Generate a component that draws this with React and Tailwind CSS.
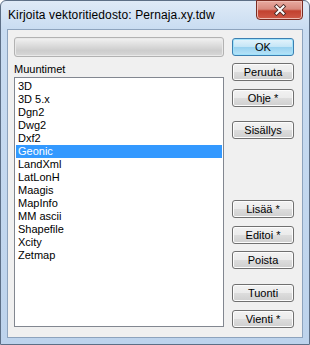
const items = [
  "3D",
  "3D 5.x",
  "Dgn2",
  "Dwg2",
  "Dxf2",
  "Geonic",
  "LandXml",
  "LatLonH",
  "Maagis",
  "MapInfo",
  "MM ascii",
  "Shapefile",
  "Xcity",
  "Zetmap",
];

function Btn({ label, def, className = "" }) {
  return (
    <div
      className={`h-[18px] w-[62px] rounded-[3px] border flex items-center justify-center text-[11px] leading-none text-black ${
        def
          ? "border-[#3c7fb1] bg-[linear-gradient(to_bottom,#e5f4fc_0%,#c4e5f6_50%,#98d1ef_50%,#b7e3f8_100%)] shadow-[inset_0_0_0_1px_#9ee2fb]"
          : "border-[#707070] bg-[linear-gradient(to_bottom,#f2f2f2_0%,#ebebeb_50%,#dddddd_50%,#cfcfcf_100%)] shadow-[inset_0_0_0_1px_#fcfcfc]"
      } ${className}`}
    >
      {label}
    </div>
  );
}

export default function App() {
  return (
    <div
      className="w-[310px] h-[345px] flex flex-col rounded-t-[6px] border border-[#5d6f86] bg-[linear-gradient(to_bottom,#dfeaf7_0px,#c9dcf1_28px,#bdd3ec_100%)]"
      style={{ fontFamily: '"Liberation Sans", Arial, sans-serif' }}
    >
      {/* otsikkopalkki */}
      <div className="h-[28px] flex items-start">
        <div className="pl-[7px] pt-[7px] text-[12px] leading-[15px] tracking-[0.12px] text-black">
          Kirjoita vektoritiedosto: Pernaja.xy.tdw
        </div>
        <div className="ml-auto mr-[6px] -mt-px h-[20px] w-[47px] rounded-b-[4px] border border-[#7a2c22] bg-[linear-gradient(to_bottom,#e8aaa0_0%,#d88a7e_45%,#c2412f_55%,#cf5a48_100%)] shadow-[inset_0_0_0_1px_#eebbb2] flex items-center justify-center">
          <svg width="14" height="12" viewBox="0 0 14 12">
            <path
              d="M3.5 2.5 L10.5 9.5 M10.5 2.5 L3.5 9.5"
              stroke="#4a2a26"
              strokeWidth="3.8"
              strokeLinecap="square"
            />
            <path
              d="M3.5 2.5 L10.5 9.5 M10.5 2.5 L3.5 9.5"
              stroke="#ffffff"
              strokeWidth="2"
              strokeLinecap="square"
            />
          </svg>
        </div>
      </div>

      {/* asiakasalue */}
      <div className="flex-1 mx-[6px] mb-[6px] border border-[#8da3bd] bg-[#f0f0f0] flex">
        <div className="ml-[6px] w-[210px] flex flex-col">
          <div className="mt-[7px] h-[20px] rounded-[3px] border border-[#b2b2b2] bg-[linear-gradient(to_bottom,#f3f3f3_0%,#e2e2e2_30%,#cdcdcd_70%,#d8d8d8_100%)] shadow-[inset_0_0_0_1px_#e9e9e9]" />
          <div className="pt-[6px] pb-px text-[11px] leading-[13px] text-black">
            Muuntimet
          </div>
          <div className="h-[250px] border border-[#828790] bg-white pt-[2px] px-px">
            {items.map((it) => (
              <div
                key={it}
                className={`h-[13px] pl-[2px] text-[11px] leading-[13px] ${
                  it === "Geonic" ? "bg-[#3399ff] text-white" : "text-black"
                }`}
              >
                {it}
              </div>
            ))}
          </div>
        </div>

        <div className="ml-[8px] flex flex-col">
          <Btn label="OK" def className="mt-[8px]" />
          <Btn label="Peruuta" className="mt-[7px]" />
          <Btn label="Ohje *" className="mt-[8px]" />
          <Btn label="Sisällys" className="mt-[14px]" />
          <Btn label="Lisää *" className="mt-[61px]" />
          <Btn label="Editoi *" className="mt-[8px]" />
          <Btn label="Poista" className="mt-[7px]" />
          <Btn label="Tuonti" className="mt-[15px]" />
          <Btn label="Vienti *" className="mt-[8px]" />
        </div>
      </div>
    </div>
  );
}
